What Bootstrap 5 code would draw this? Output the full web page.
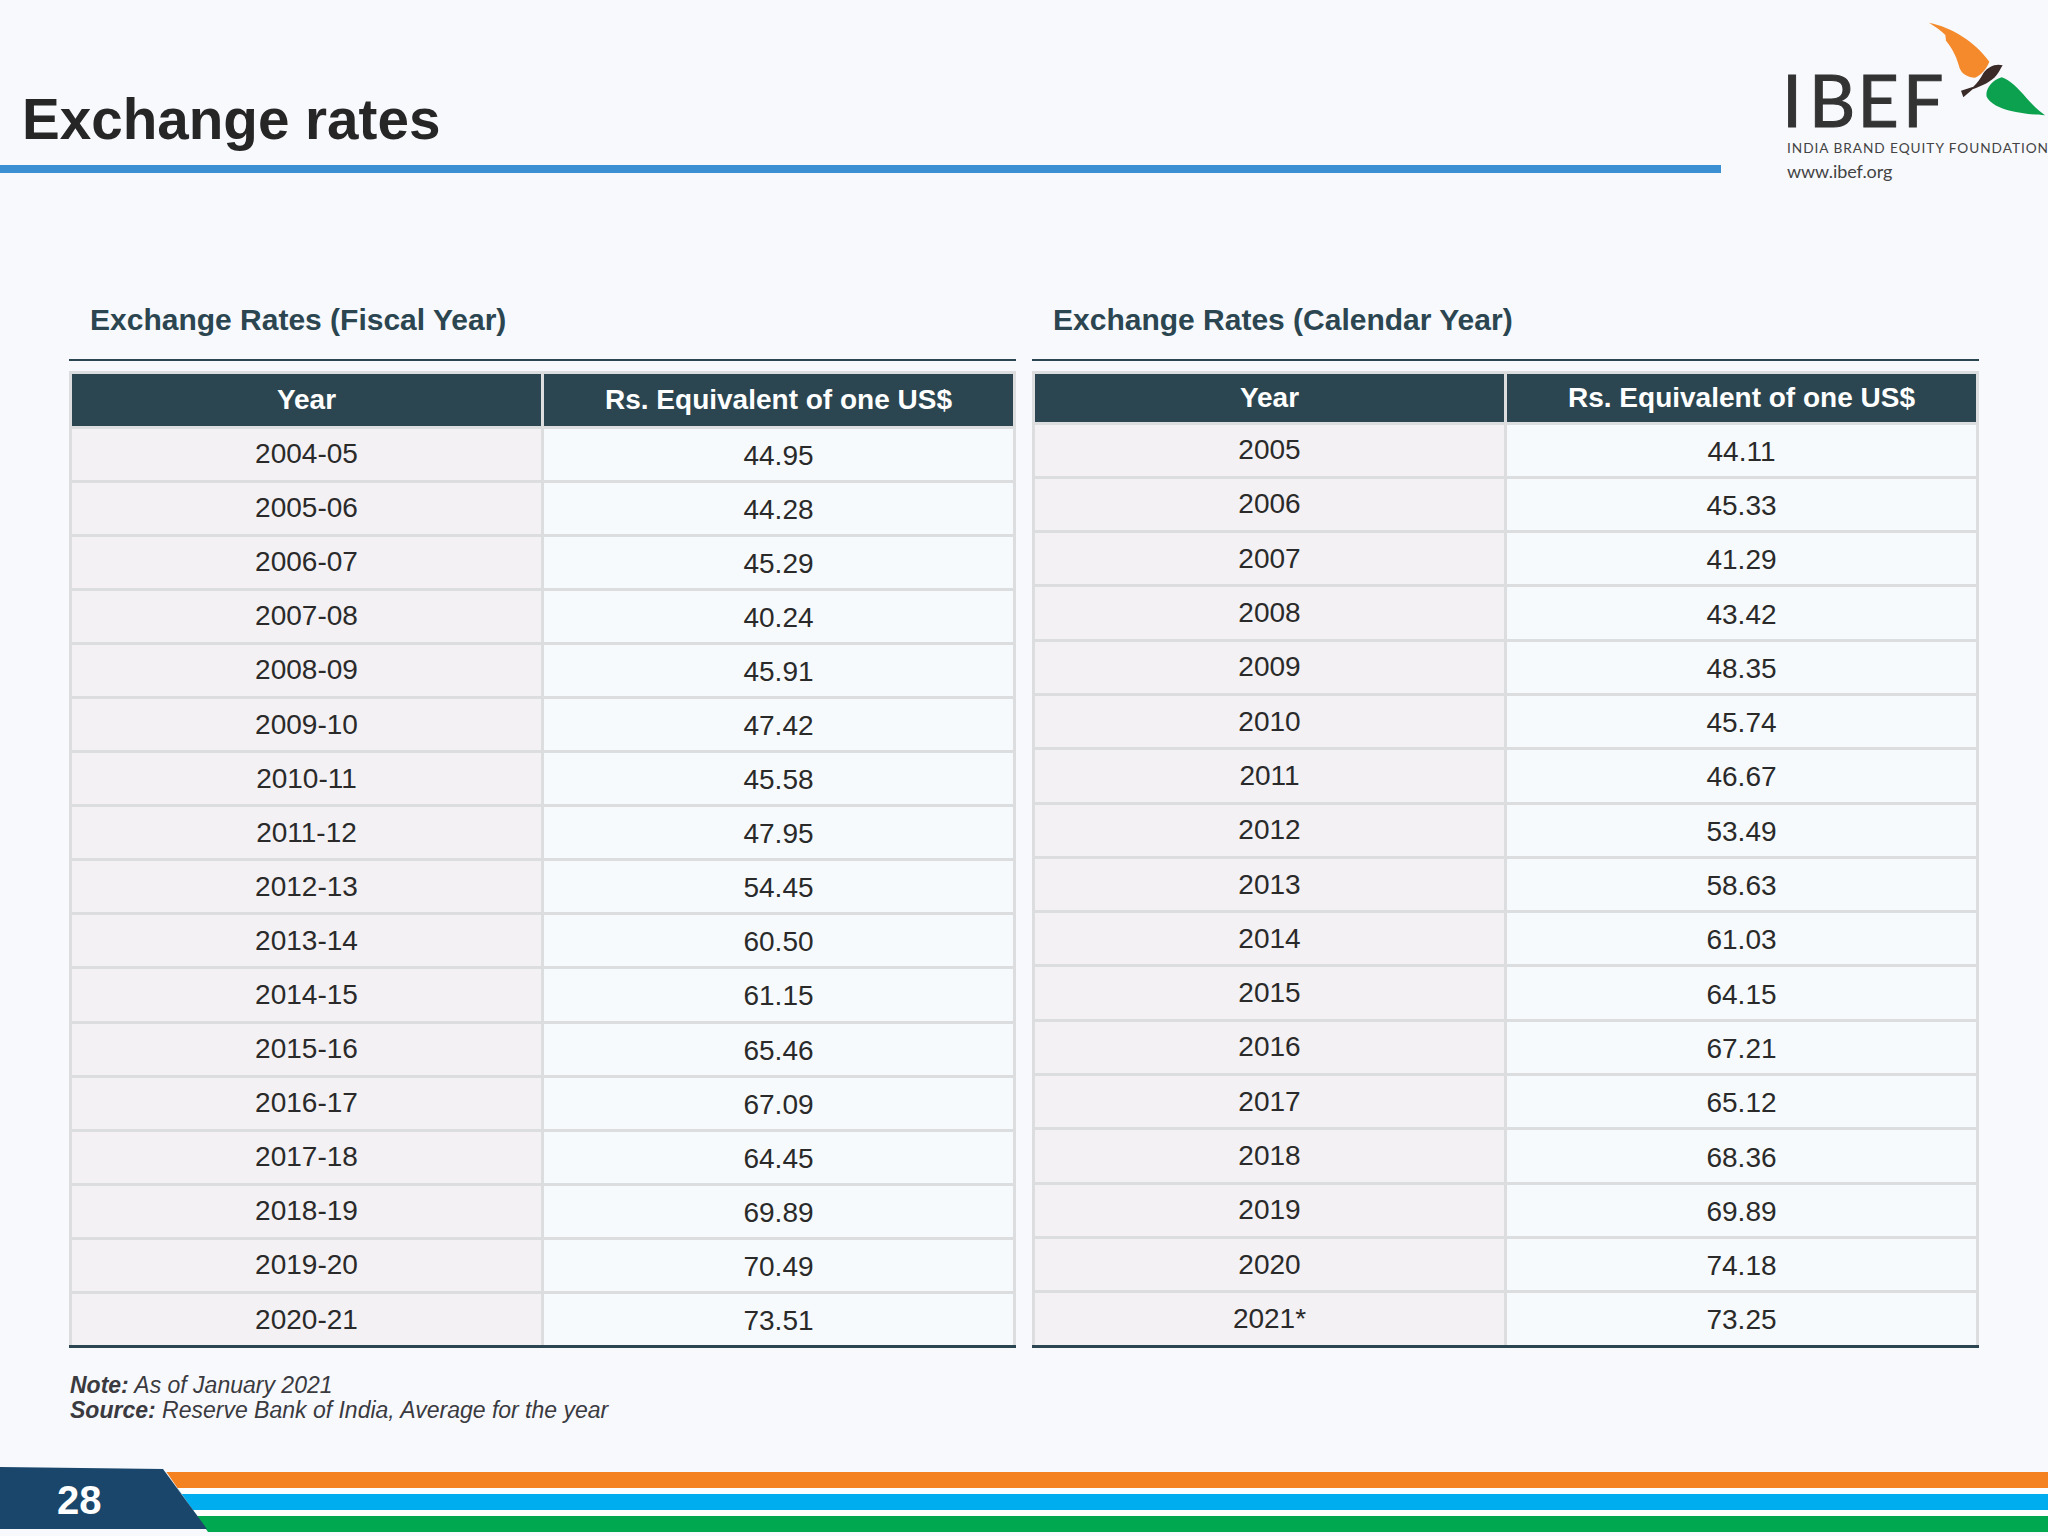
<!DOCTYPE html>
<html lang="en">
<head>
    <meta charset="UTF-8">
    <meta name="viewport" content="width=device-width, initial-scale=1.0">
    <title>Exchange rates</title>
    <link href="https://cdn.jsdelivr.net/npm/bootstrap@5.3.0/dist/css/bootstrap.min.css" rel="stylesheet">
    <style>
        html, body { height: 100%; }
        body { background-color: #f7f9fd; font-family: "Liberation Sans", Arial, sans-serif; color: #222; overflow: hidden; }
        .slide { width: 2048px; height: 1536px; padding-bottom: 4px; }
        .slide-head { height: 173px; }
        .title-block { width: 1721px; }
        .slide-title { font-size: 56.6px; font-weight: 700; line-height: 66px; color: #262626; padding: 87px 0 12px 22px; margin: 0; }
        .title-rule { height: 8px; background-color: #3a90d2; }
        .logo-svg { width: 328px; height: 200px; flex: none; margin-left: -1px; }
        .tables-wrap { padding: 0 68px 0 69px; gap: 16px; }
        .rates-col { width: 947px; flex: none; }
        .rates-heading { font-size: 30px; font-weight: 700; line-height: 38px; color: #2b4650; margin: 0; padding: 128px 0 20px 21px; border-bottom: 2px solid #2b4650; }
        .rate-table { table-layout: fixed; margin: 10px 0 0; border-collapse: collapse; border: 3px solid #dcdddf; border-bottom: 3px solid #2b4650; width: 100%; }
        .rate-table th, .rate-table td { padding: 0; text-align: center; vertical-align: middle; font-size: 28px; line-height: 32px; border: 3px solid #dcdddf; box-shadow: none; }
        .rate-table th { background-color: #2b4650; color: #fff; font-weight: 700; border-top-width: 2px; }
        .rate-table td { color: #2a2a2a; background-color: #f7fafc; padding-top: 3px; }
        .rate-table td:first-child { background-color: #f3f1f4; padding-top: 0; }
        .rate-table tbody tr:last-child td { border-bottom: 3px solid #2b4650; }
        .fiscal thead tr { height: 54.5px; }
        .fiscal tbody tr { height: 54.1px; }
        .calendar thead tr { height: 50.5px; }
        .calendar tbody tr { height: 54.3px; }
        .foot-notes { font-size: 23px; line-height: 25px; font-style: italic; color: #3a3a3f; padding: 25px 0 0 70px; }
        .slide-foot { height: 65px; }
        .stripes { padding-top: 5px; height: 65px; clip-path: polygon(163px 0, 100% 0, 100% 100%, 208px 100%); }
        .stripe-bar { height: 16px; flex: none; }
        .stripe-orange { background-color: #f58220; }
        .stripe-blue { background-color: #00aeef; box-sizing: content-box; border-top: 6px solid #fdfefe; border-bottom: 6px solid #fdfefe; }
        .stripe-green { background-color: #00a94f; }
        .page-tab { position: absolute; left: 0; top: 0; width: 207px; height: 62px; background-color: #19466a; clip-path: polygon(0 0, 163px 2px, 207px 100%, 0 100%); color: #fff; font-size: 40px; font-weight: 700; line-height: 66px; padding-left: 57px; }
    </style>
</head>
<body>
    <div class="slide d-flex flex-column">
        <div class="slide-head d-flex">
            <div class="title-block">
                <h1 class="slide-title">Exchange rates</h1>
                <div class="title-rule"></div>
            </div>
            <svg class="logo-svg" viewBox="0 0 984 600">
                <path fill="#f58a2c" d="M627 68C695 82 765 125 808 185C800 205 785 225 765 233C745 232 722 224 716 195C708 165 692 138 678 122L676 105C665 92 645 80 627 68Z"/>
                <path fill="#0ba14e" d="M845 232C870 240 895 265 920 295C940 318 960 335 975 346C945 345 905 340 870 332C840 325 810 310 800 290C795 270 815 240 845 232Z"/>
                <path fill="#3a2b28" d="M848 196C828 190 805 198 790 220C782 235 772 250 760 260L723 272L730 292L758 268C785 258 815 245 830 225C838 215 842 205 848 196Z"/>
                <text x="186 266 412 548" y="382" font-family="Lato, sans-serif" font-size="216" fill="#333" stroke="#333" stroke-width="3">IBEF</text>
                <text x="201" y="458" font-family="Lato, sans-serif" font-size="41" fill="#444" textLength="783" lengthAdjust="spacing">INDIA BRAND EQUITY FOUNDATION</text>
                <text x="201" y="535" font-family="Lato, sans-serif" font-size="54" fill="#444" textLength="316" lengthAdjust="spacing">www.ibef.org</text>
            </svg>
        </div>

        <div class="tables-wrap d-flex">
            <div class="rates-col">
                <h2 class="rates-heading">Exchange Rates (Fiscal Year)</h2>
                <table class="table rate-table fiscal">
                    <thead><tr><th>Year</th><th>Rs. Equivalent of one US$</th></tr></thead>
                    <tbody>
                        <tr><td>2004-05</td><td>44.95</td></tr>
                        <tr><td>2005-06</td><td>44.28</td></tr>
                        <tr><td>2006-07</td><td>45.29</td></tr>
                        <tr><td>2007-08</td><td>40.24</td></tr>
                        <tr><td>2008-09</td><td>45.91</td></tr>
                        <tr><td>2009-10</td><td>47.42</td></tr>
                        <tr><td>2010-11</td><td>45.58</td></tr>
                        <tr><td>2011-12</td><td>47.95</td></tr>
                        <tr><td>2012-13</td><td>54.45</td></tr>
                        <tr><td>2013-14</td><td>60.50</td></tr>
                        <tr><td>2014-15</td><td>61.15</td></tr>
                        <tr><td>2015-16</td><td>65.46</td></tr>
                        <tr><td>2016-17</td><td>67.09</td></tr>
                        <tr><td>2017-18</td><td>64.45</td></tr>
                        <tr><td>2018-19</td><td>69.89</td></tr>
                        <tr><td>2019-20</td><td>70.49</td></tr>
                        <tr><td>2020-21</td><td>73.51</td></tr>
                    </tbody>
                </table>
            </div>
            <div class="rates-col">
                <h2 class="rates-heading">Exchange Rates (Calendar Year)</h2>
                <table class="table rate-table calendar">
                    <thead><tr><th>Year</th><th>Rs. Equivalent of one US$</th></tr></thead>
                    <tbody>
                        <tr><td>2005</td><td>44.11</td></tr>
                        <tr><td>2006</td><td>45.33</td></tr>
                        <tr><td>2007</td><td>41.29</td></tr>
                        <tr><td>2008</td><td>43.42</td></tr>
                        <tr><td>2009</td><td>48.35</td></tr>
                        <tr><td>2010</td><td>45.74</td></tr>
                        <tr><td>2011</td><td>46.67</td></tr>
                        <tr><td>2012</td><td>53.49</td></tr>
                        <tr><td>2013</td><td>58.63</td></tr>
                        <tr><td>2014</td><td>61.03</td></tr>
                        <tr><td>2015</td><td>64.15</td></tr>
                        <tr><td>2016</td><td>67.21</td></tr>
                        <tr><td>2017</td><td>65.12</td></tr>
                        <tr><td>2018</td><td>68.36</td></tr>
                        <tr><td>2019</td><td>69.89</td></tr>
                        <tr><td>2020</td><td>74.18</td></tr>
                        <tr><td>2021*</td><td>73.25</td></tr>
                    </tbody>
                </table>
            </div>
        </div>

        <div class="foot-notes flex-grow-1">
            <div><b>Note:</b> As of January 2021</div>
            <div><b>Source:</b> Reserve Bank of India, Average for the year</div>
        </div>

        <div class="slide-foot position-relative">
            <div class="stripes d-flex flex-column">
                <div class="stripe-bar stripe-orange"></div>
                <div class="stripe-bar stripe-blue"></div>
                <div class="stripe-bar stripe-green"></div>
            </div>
            <div class="page-tab">28</div>
        </div>
    </div>
</body>
</html>
